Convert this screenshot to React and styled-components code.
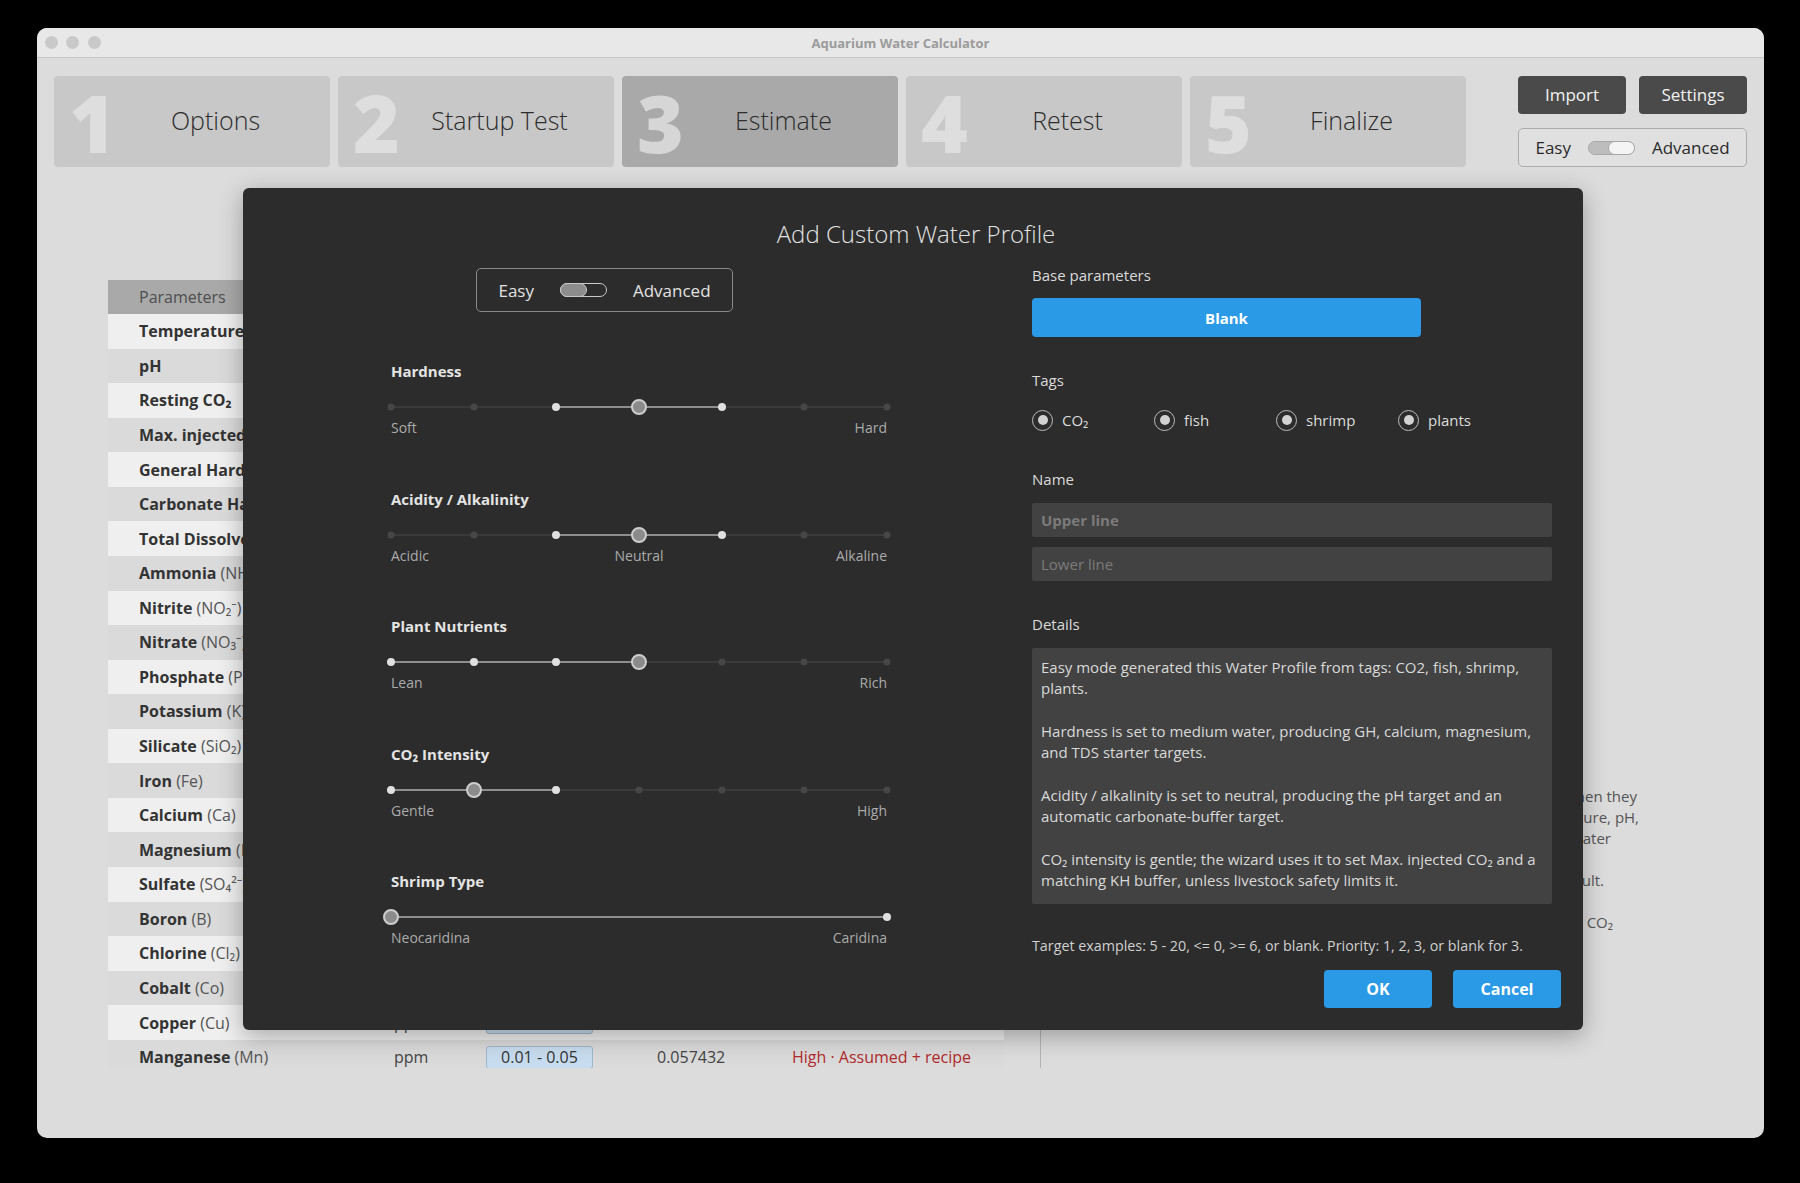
import React from "react";
import styled, { createGlobalStyle } from "styled-components";

const GlobalStyle = createGlobalStyle`
  * {
    box-sizing: border-box;
  }
  html,
  body {
    margin: 0;
    padding: 0;
    background: #000;
  }
  body {
    width: 1800px;
    height: 1183px;
    overflow: hidden;
    font-family: "Open Sans", "Noto Sans", sans-serif;
  }
`;

const steps = [
  { num: "1", label: "Options" },
  { num: "2", label: "Startup Test" },
  { num: "3", label: "Estimate", active: true },
  { num: "4", label: "Retest" },
  { num: "5", label: "Finalize" },
];

const rows = [
  { name: "Temperature", unit: "°C" },
  { name: "pH", unit: "" },
  { name: "Resting CO₂", unit: "ppm" },
  { name: "Max. injected CO₂", unit: "ppm" },
  { name: "General Hardness", extra: "(GH)", unit: "°dH" },
  { name: "Carbonate Hardness", extra: "(KH)", unit: "°dH" },
  { name: "Total Dissolved Solids", extra: "(TDS)", unit: "ppm" },
  { name: "Ammonia", extra: "(NH₃/NH₄⁺)", unit: "ppm" },
  { name: "Nitrite", extra: "(NO₂⁻)", unit: "ppm" },
  { name: "Nitrate", extra: "(NO₃⁻)", unit: "ppm" },
  { name: "Phosphate", extra: "(PO₄³⁻)", unit: "ppm" },
  { name: "Potassium", extra: "(K)", unit: "ppm" },
  { name: "Silicate", extra: "(SiO₂)", unit: "ppm" },
  { name: "Iron", extra: "(Fe)", unit: "ppm" },
  { name: "Calcium", extra: "(Ca)", unit: "ppm" },
  { name: "Magnesium", extra: "(Mg)", unit: "ppm" },
  { name: "Sulfate", extra: "(SO₄²⁻)", unit: "ppm" },
  { name: "Boron", extra: "(B)", unit: "ppm" },
  { name: "Chlorine", extra: "(Cl₂)", unit: "ppm" },
  { name: "Cobalt", extra: "(Co)", unit: "ppm" },
  { name: "Copper", extra: "(Cu)", unit: "ppm", target: "<= 0.02" },
  {
    name: "Manganese",
    extra: "(Mn)",
    unit: "ppm",
    target: "0.01 - 0.05",
    value: "0.057432",
    status: "High · Assumed + recipe",
    warn: true,
  },
];

const notes = [
  { text: "when they", inset: 3 },
  { text: "temperature, pH,", inset: 1 },
  { text: "water", inset: 29 },
  { text: "result.", inset: 36, gap: true },
  { text: "CO₂", inset: 27, gap: true },
];

const sliders = [
  { title: "Hardness", ticks: 7, lo: 2, hi: 4, value: 3, ends: ["Soft", "Hard"] },
  { title: "Acidity / Alkalinity", ticks: 7, lo: 2, hi: 4, value: 3, ends: ["Acidic", "Neutral", "Alkaline"] },
  { title: "Plant Nutrients", ticks: 7, lo: 0, hi: 3, value: 3, ends: ["Lean", "Rich"] },
  { title: "CO₂ Intensity", ticks: 7, lo: 0, hi: 2, value: 1, ends: ["Gentle", "High"] },
  { title: "Shrimp Type", ticks: 2, lo: 0, hi: 1, value: 0, ends: ["Neocaridina", "Caridina"] },
];

const tags = ["CO₂", "fish", "shrimp", "plants"];

const details = [
  "Easy mode generated this Water Profile from tags: CO2, fish, shrimp, plants.",
  "Hardness is set to medium water, producing GH, calcium, magnesium, and TDS starter targets.",
  "Acidity / alkalinity is set to neutral, producing the pH target and an automatic carbonate-buffer target.",
  "CO₂ intensity is gentle; the wizard uses it to set Max. injected CO₂ and a matching KH buffer, unless livestock safety limits it.",
];

const Slider = ({ ticks, lo, hi, value }) => {
  const pos = (i) => (ticks > 1 ? (i / (ticks - 1)) * 100 : 0);
  return (
    <St.Track>
      <St.TrackLine />
      <St.TrackActive style={{ left: `${pos(lo)}%`, width: `${pos(hi) - pos(lo)}%` }} />
      {Array.from({ length: ticks }).map((_, i) =>
        i === value ? null : (
          <St.Tick key={i} $on={i >= lo && i <= hi} style={{ left: `${pos(i)}%` }} />
        )
      )}
      <St.Knob style={{ left: `${pos(value)}%` }} />
    </St.Track>
  );
};

const ModeSwitch = ({ dark }) => (
  <St.ModeBox $dark={dark}>
    <span>Easy</span>
    <St.SwitchTrack $dark={dark}>
      <St.SwitchKnob $dark={dark} />
    </St.SwitchTrack>
    <span>Advanced</span>
  </St.ModeBox>
);

const App = () => {
  return (
    <>
      <GlobalStyle />
      <St.Page>
        <St.Window>
          <St.TitleBar>
            <St.Lights>
              <St.Light />
              <St.Light />
              <St.Light />
            </St.Lights>
            <St.WindowTitle>Aquarium Water Calculator</St.WindowTitle>
            <div />
          </St.TitleBar>

          <St.Body>
            <St.TopBar>
              <St.Steps>
                {steps.map((s) => (
                  <St.StepTile key={s.num} $active={s.active}>
                    <St.StepNum $active={s.active}>{s.num}</St.StepNum>
                    <St.StepLabel>{s.label}</St.StepLabel>
                  </St.StepTile>
                ))}
              </St.Steps>
              <St.Controls>
                <St.ButtonRow>
                  <St.DarkButton>Import</St.DarkButton>
                  <St.DarkButton>Settings</St.DarkButton>
                </St.ButtonRow>
                <ModeSwitch />
              </St.Controls>
            </St.TopBar>

            <St.Workspace>
              <St.TableViewport>
                <St.HeaderRow>
                  <St.HeadCell $first>Parameters</St.HeadCell>
                </St.HeaderRow>
                {rows.map((r, i) => (
                  <St.Row key={r.name} $shade={i % 2 === 1}>
                    <St.ParamCell>
                      <b>{r.name}</b>
                      {r.extra && <St.Extra> {r.extra}</St.Extra>}
                    </St.ParamCell>
                    <St.Cell>{r.unit}</St.Cell>
                    <St.Cell>{r.target && <St.TargetBox>{r.target}</St.TargetBox>}</St.Cell>
                    <St.Cell>{r.value}</St.Cell>
                    <St.Cell $warn={r.warn}>{r.status}</St.Cell>
                  </St.Row>
                ))}
              </St.TableViewport>
              <St.SidePanel>
                <St.Notes>
                  {notes.map((n) => (
                    <St.NoteLine key={n.text} $inset={n.inset} $gap={n.gap}>
                      {n.text}
                    </St.NoteLine>
                  ))}
                </St.Notes>
              </St.SidePanel>
            </St.Workspace>
          </St.Body>

          <St.Dialog>
            <St.DialogTitle>Add Custom Water Profile</St.DialogTitle>
            <St.DialogBody>
              <St.LeftCol>
                <St.ToggleWrap>
                  <ModeSwitch dark />
                </St.ToggleWrap>
                {sliders.map((s) => (
                  <St.SliderGroup key={s.title}>
                    <St.SliderTitle>{s.title}</St.SliderTitle>
                    <Slider {...s} />
                    <St.Ends $three={s.ends.length === 3}>
                      {s.ends.map((e) => (
                        <span key={e}>{e}</span>
                      ))}
                    </St.Ends>
                  </St.SliderGroup>
                ))}
              </St.LeftCol>

              <St.RightCol>
                <St.FieldLabel>Base parameters</St.FieldLabel>
                <St.BlankButton>Blank</St.BlankButton>

                <St.FieldLabel $space={32}>Tags</St.FieldLabel>
                <St.RadioRow>
                  {tags.map((t) => (
                    <St.RadioItem key={t}>
                      <St.RadioRing>
                        <St.RadioDot />
                      </St.RadioRing>
                      {t}
                    </St.RadioItem>
                  ))}
                </St.RadioRow>

                <St.FieldLabel $space={37}>Name</St.FieldLabel>
                <St.TextInput $bold placeholder="Upper line" $space={13} />
                <St.TextInput placeholder="Lower line" $space={10} />

                <St.FieldLabel $space={32}>Details</St.FieldLabel>
                <St.DetailsBox>
                  {details.map((p) => (
                    <p key={p}>{p}</p>
                  ))}
                </St.DetailsBox>

                <St.Hint>
                  Target examples: 5 - 20, &lt;= 0, &gt;= 6, or blank. Priority: 1, 2, 3, or blank for 3.
                </St.Hint>
                <St.DialogButtons>
                  <St.BlueButton>OK</St.BlueButton>
                  <St.BlueButton>Cancel</St.BlueButton>
                </St.DialogButtons>
              </St.RightCol>
            </St.DialogBody>
          </St.Dialog>
        </St.Window>
      </St.Page>
    </>
  );
};

export default App;

const St = {
  Page: styled.div`
    width: 1800px;
    height: 1183px;
    padding: 28px 36px 0 37px;
    background: #000;
  `,
  Window: styled.div`
    position: relative;
    width: 1727px;
    height: 1110px;
    border-radius: 10px;
    overflow: hidden;
    background: #dcdcdc;
  `,
  TitleBar: styled.div`
    display: grid;
    grid-template-columns: 1fr auto 1fr;
    align-items: center;
    height: 30px;
    background: #e8e8e8;
    border-bottom: 1px solid #c6c6c6;
  `,
  Lights: styled.div`
    display: flex;
    gap: 8.5px;
    padding-left: 7.5px;
  `,
  Light: styled.div`
    width: 13px;
    height: 13px;
    border-radius: 50%;
    background: #c9c9c9;
  `,
  WindowTitle: styled.div`
    font-size: 13px;
    font-weight: 700;
    color: #9b9b9b;
  `,
  Body: styled.div`
    padding: 18px 17px 0 17px;
  `,
  TopBar: styled.div`
    display: flex;
    align-items: flex-start;
  `,
  Steps: styled.div`
    display: flex;
    gap: 8px;
  `,
  StepTile: styled.div`
    display: flex;
    align-items: center;
    width: 276px;
    height: 91px;
    border-radius: 4px;
    background: ${({ $active }) => ($active ? "#a9a9a9" : "#c8c8c8")};
  `,
  StepNum: styled.div`
    width: 47px;
    padding-left: 15px;
    font-size: 80px;
    font-weight: 800;
    line-height: 1;
    color: ${({ $active }) => ($active ? "#d6d6d6" : "#dedede")};
    white-space: nowrap;
  `,
  StepLabel: styled.div`
    flex: 1;
    padding-bottom: 4px;
    text-align: center;
    font-size: 25px;
    font-weight: 300;
    color: #2c2c2c;
  `,
  Controls: styled.div`
    display: flex;
    flex-direction: column;
    gap: 14px;
    width: 229px;
    margin-left: auto;
  `,
  ButtonRow: styled.div`
    display: flex;
    justify-content: space-between;
  `,
  DarkButton: styled.div`
    display: flex;
    align-items: center;
    justify-content: center;
    width: 108px;
    height: 38px;
    padding-bottom: 2px;
    border-radius: 4px;
    background: #4a4a4a;
    color: #f2f2f2;
    font-size: 17px;
  `,
  ModeBox: styled.div`
    display: flex;
    align-items: center;
    justify-content: center;
    gap: ${({ $dark }) => ($dark ? "26px" : "17px")};
    width: ${({ $dark }) => ($dark ? "257px" : "229px")};
    height: ${({ $dark }) => ($dark ? "44px" : "39px")};
    border: 1px solid ${({ $dark }) => ($dark ? "#8a8a8a" : "#ababab")};
    border-radius: 5px;
    background: ${({ $dark }) => ($dark ? "transparent" : "#e0e0e0")};
    color: ${({ $dark }) => ($dark ? "#e2e2e2" : "#2a2a2a")};
    font-size: 17px;
  `,
  SwitchTrack: styled.div`
    display: flex;
    justify-content: ${({ $dark }) => ($dark ? "flex-start" : "flex-end")};
    width: 47px;
    height: 14px;
    border-radius: 7px;
    border: 1px solid ${({ $dark }) => ($dark ? "#c9c9c9" : "#a8a8a8")};
    background: ${({ $dark }) => ($dark ? "transparent" : "#bdbdbd")};
  `,
  SwitchKnob: styled.div`
    width: 27px;
    height: 14px;
    margin: -1px;
    border-radius: 7px;
    border: 1px solid ${({ $dark }) => ($dark ? "#c9c9c9" : "#a8a8a8")};
    background: ${({ $dark }) => ($dark ? "#8d8d8d" : "#f4f4f4")};
  `,
  Workspace: styled.div`
    display: flex;
    margin-top: 113px;
    padding-left: 54px;
  `,
  TableViewport: styled.div`
    width: 896px;
    height: 788px;
    overflow: hidden;
    font-size: 16px;
    color: #333;
  `,
  HeaderRow: styled.div`
    display: flex;
    align-items: center;
    height: 34px;
    background: #a9a9a9;
    color: #4e4e4e;
  `,
  HeadCell: styled.div`
    padding-left: ${({ $first }) => ($first ? "31px" : "0")};
  `,
  Row: styled.div`
    display: grid;
    grid-template-columns: 286px 92px 171px 135px 1fr;
    align-items: center;
    height: 34.57px;
    background: ${({ $shade }) => ($shade ? "#dadada" : "#efefef")};
  `,
  ParamCell: styled.div`
    padding-left: 31px;
    white-space: nowrap;
    b {
      font-weight: 700;
      color: #333;
    }
  `,
  Extra: styled.span`
    color: #555;
  `,
  Cell: styled.div`
    white-space: nowrap;
    color: ${({ $warn }) => ($warn ? "#b0292b" : "#444")};
  `,
  TargetBox: styled.div`
    width: 107px;
    height: 23px;
    line-height: 21px;
    text-align: center;
    border: 1px solid #9fb5c9;
    border-radius: 3px;
    background: #c7dcee;
    color: #333;
  `,
  SidePanel: styled.div`
    flex: 1;
    height: 788px;
    margin-left: 36px;
    padding-left: 20px;
    border-left: 1px solid #b3b3b3;
  `,
  Notes: styled.div`
    width: 579px;
    margin-top: 506px;
    font-size: 15px;
    line-height: 21px;
    color: #555;
    text-align: right;
  `,
  NoteLine: styled.div`
    white-space: nowrap;
    margin-right: ${({ $inset }) => $inset}px;
    margin-top: ${({ $gap }) => ($gap ? "21px" : "0")};
  `,
  Dialog: styled.div`
    position: absolute;
    left: 206px;
    top: 160px;
    width: 1340px;
    height: 842px;
    padding: 29px 22px 22px 0;
    border-radius: 6px;
    background: #2c2c2c;
    box-shadow: 0 6px 24px rgba(0, 0, 0, 0.3);
    color: #dcdcdc;
  `,
  DialogTitle: styled.div`
    padding-left: 28px;
    text-align: center;
    font-size: 24px;
    font-weight: 300;
    line-height: 34px;
    color: #e2e2e2;
  `,
  DialogBody: styled.div`
    display: flex;
    margin-top: 13px;
  `,
  LeftCol: styled.div`
    width: 789px;
    padding-left: 148px;
  `,
  ToggleWrap: styled.div`
    margin: 4px 0 0 85px;
  `,
  SliderGroup: styled.div`
    width: 496px;
    margin-top: 48px;
    & + & {
      margin-top: 49.5px;
    }
  `,
  SliderTitle: styled.div`
    font-size: 15px;
    font-weight: 700;
    line-height: 22px;
    color: #e4e4e4;
  `,
  Track: styled.div`
    position: relative;
    height: 20px;
    margin-top: 15px;
  `,
  TrackLine: styled.div`
    position: absolute;
    left: 0;
    right: 0;
    top: 9px;
    height: 2px;
    background: #3a3a3a;
  `,
  TrackActive: styled.div`
    position: absolute;
    top: 9px;
    height: 2px;
    background: #8e8e8e;
  `,
  Tick: styled.div`
    position: absolute;
    top: 50%;
    width: ${({ $on }) => ($on ? "8px" : "7px")};
    height: ${({ $on }) => ($on ? "8px" : "7px")};
    border-radius: 50%;
    transform: translate(-50%, -50%);
    background: ${({ $on }) => ($on ? "#e0e0e0" : "#474747")};
  `,
  Knob: styled.div`
    position: absolute;
    top: 50%;
    width: 16px;
    height: 16px;
    border-radius: 50%;
    transform: translate(-50%, -50%);
    background: #8b8b8b;
    border: 2px solid #cdcdcd;
  `,
  Ends: styled.div`
    display: grid;
    grid-template-columns: ${({ $three }) => ($three ? "1fr auto 1fr" : "1fr 1fr")};
    margin-top: 1px;
    font-size: 14px;
    line-height: 20px;
    color: #ababab;
    span:last-child {
      text-align: right;
    }
  `,
  RightCol: styled.div`
    display: flex;
    flex-direction: column;
    width: 529px;
  `,
  FieldLabel: styled.div`
    margin-top: ${({ $space }) => $space || 0}px;
    font-size: 15px;
    line-height: 22px;
    color: #dadada;
  `,
  BlankButton: styled.div`
    display: flex;
    align-items: center;
    justify-content: center;
    width: 389px;
    height: 39px;
    margin-top: 12px;
    border-radius: 4px;
    background: #2b9ae6;
    color: #fff;
    font-size: 15px;
    font-weight: 700;
  `,
  RadioRow: styled.div`
    display: flex;
    height: 22px;
    margin-top: 18px;
  `,
  RadioItem: styled.div`
    display: flex;
    align-items: center;
    gap: 9px;
    width: 122px;
    font-size: 15px;
    color: #dcdcdc;
  `,
  RadioRing: styled.div`
    display: flex;
    align-items: center;
    justify-content: center;
    width: 21px;
    height: 21px;
    border-radius: 50%;
    border: 1.5px solid #bdbdbd;
  `,
  RadioDot: styled.div`
    width: 10px;
    height: 10px;
    border-radius: 50%;
    background: #d2d2d2;
  `,
  TextInput: styled.input`
    width: 520px;
    height: 34px;
    margin-top: ${({ $space }) => $space}px;
    padding: 0 9px;
    border: none;
    border-radius: 2px;
    outline: none;
    background: #424242;
    color: #ddd;
    font-family: inherit;
    font-size: 15px;
    font-weight: ${({ $bold }) => ($bold ? 700 : 400)};
    &::placeholder {
      color: #7b7b7b;
    }
  `,
  DetailsBox: styled.div`
    width: 520px;
    height: 256px;
    margin-top: 13px;
    padding: 9px 9px;
    border-radius: 2px;
    background: #424242;
    font-size: 15px;
    line-height: 21.3px;
    color: #d9d9d9;
    p {
      margin: 0;
    }
    p + p {
      margin-top: 21.3px;
    }
  `,
  Hint: styled.div`
    margin-top: 31px;
    font-size: 14.3px;
    line-height: 22px;
    color: #d0d0d0;
    white-space: nowrap;
  `,
  DialogButtons: styled.div`
    display: flex;
    justify-content: flex-end;
    gap: 21px;
    margin-top: 13px;
  `,
  BlueButton: styled.div`
    display: flex;
    align-items: center;
    justify-content: center;
    width: 108px;
    height: 38px;
    border-radius: 4px;
    background: #2b9ae6;
    color: #fff;
    font-size: 16px;
    font-weight: 700;
  `,
};
